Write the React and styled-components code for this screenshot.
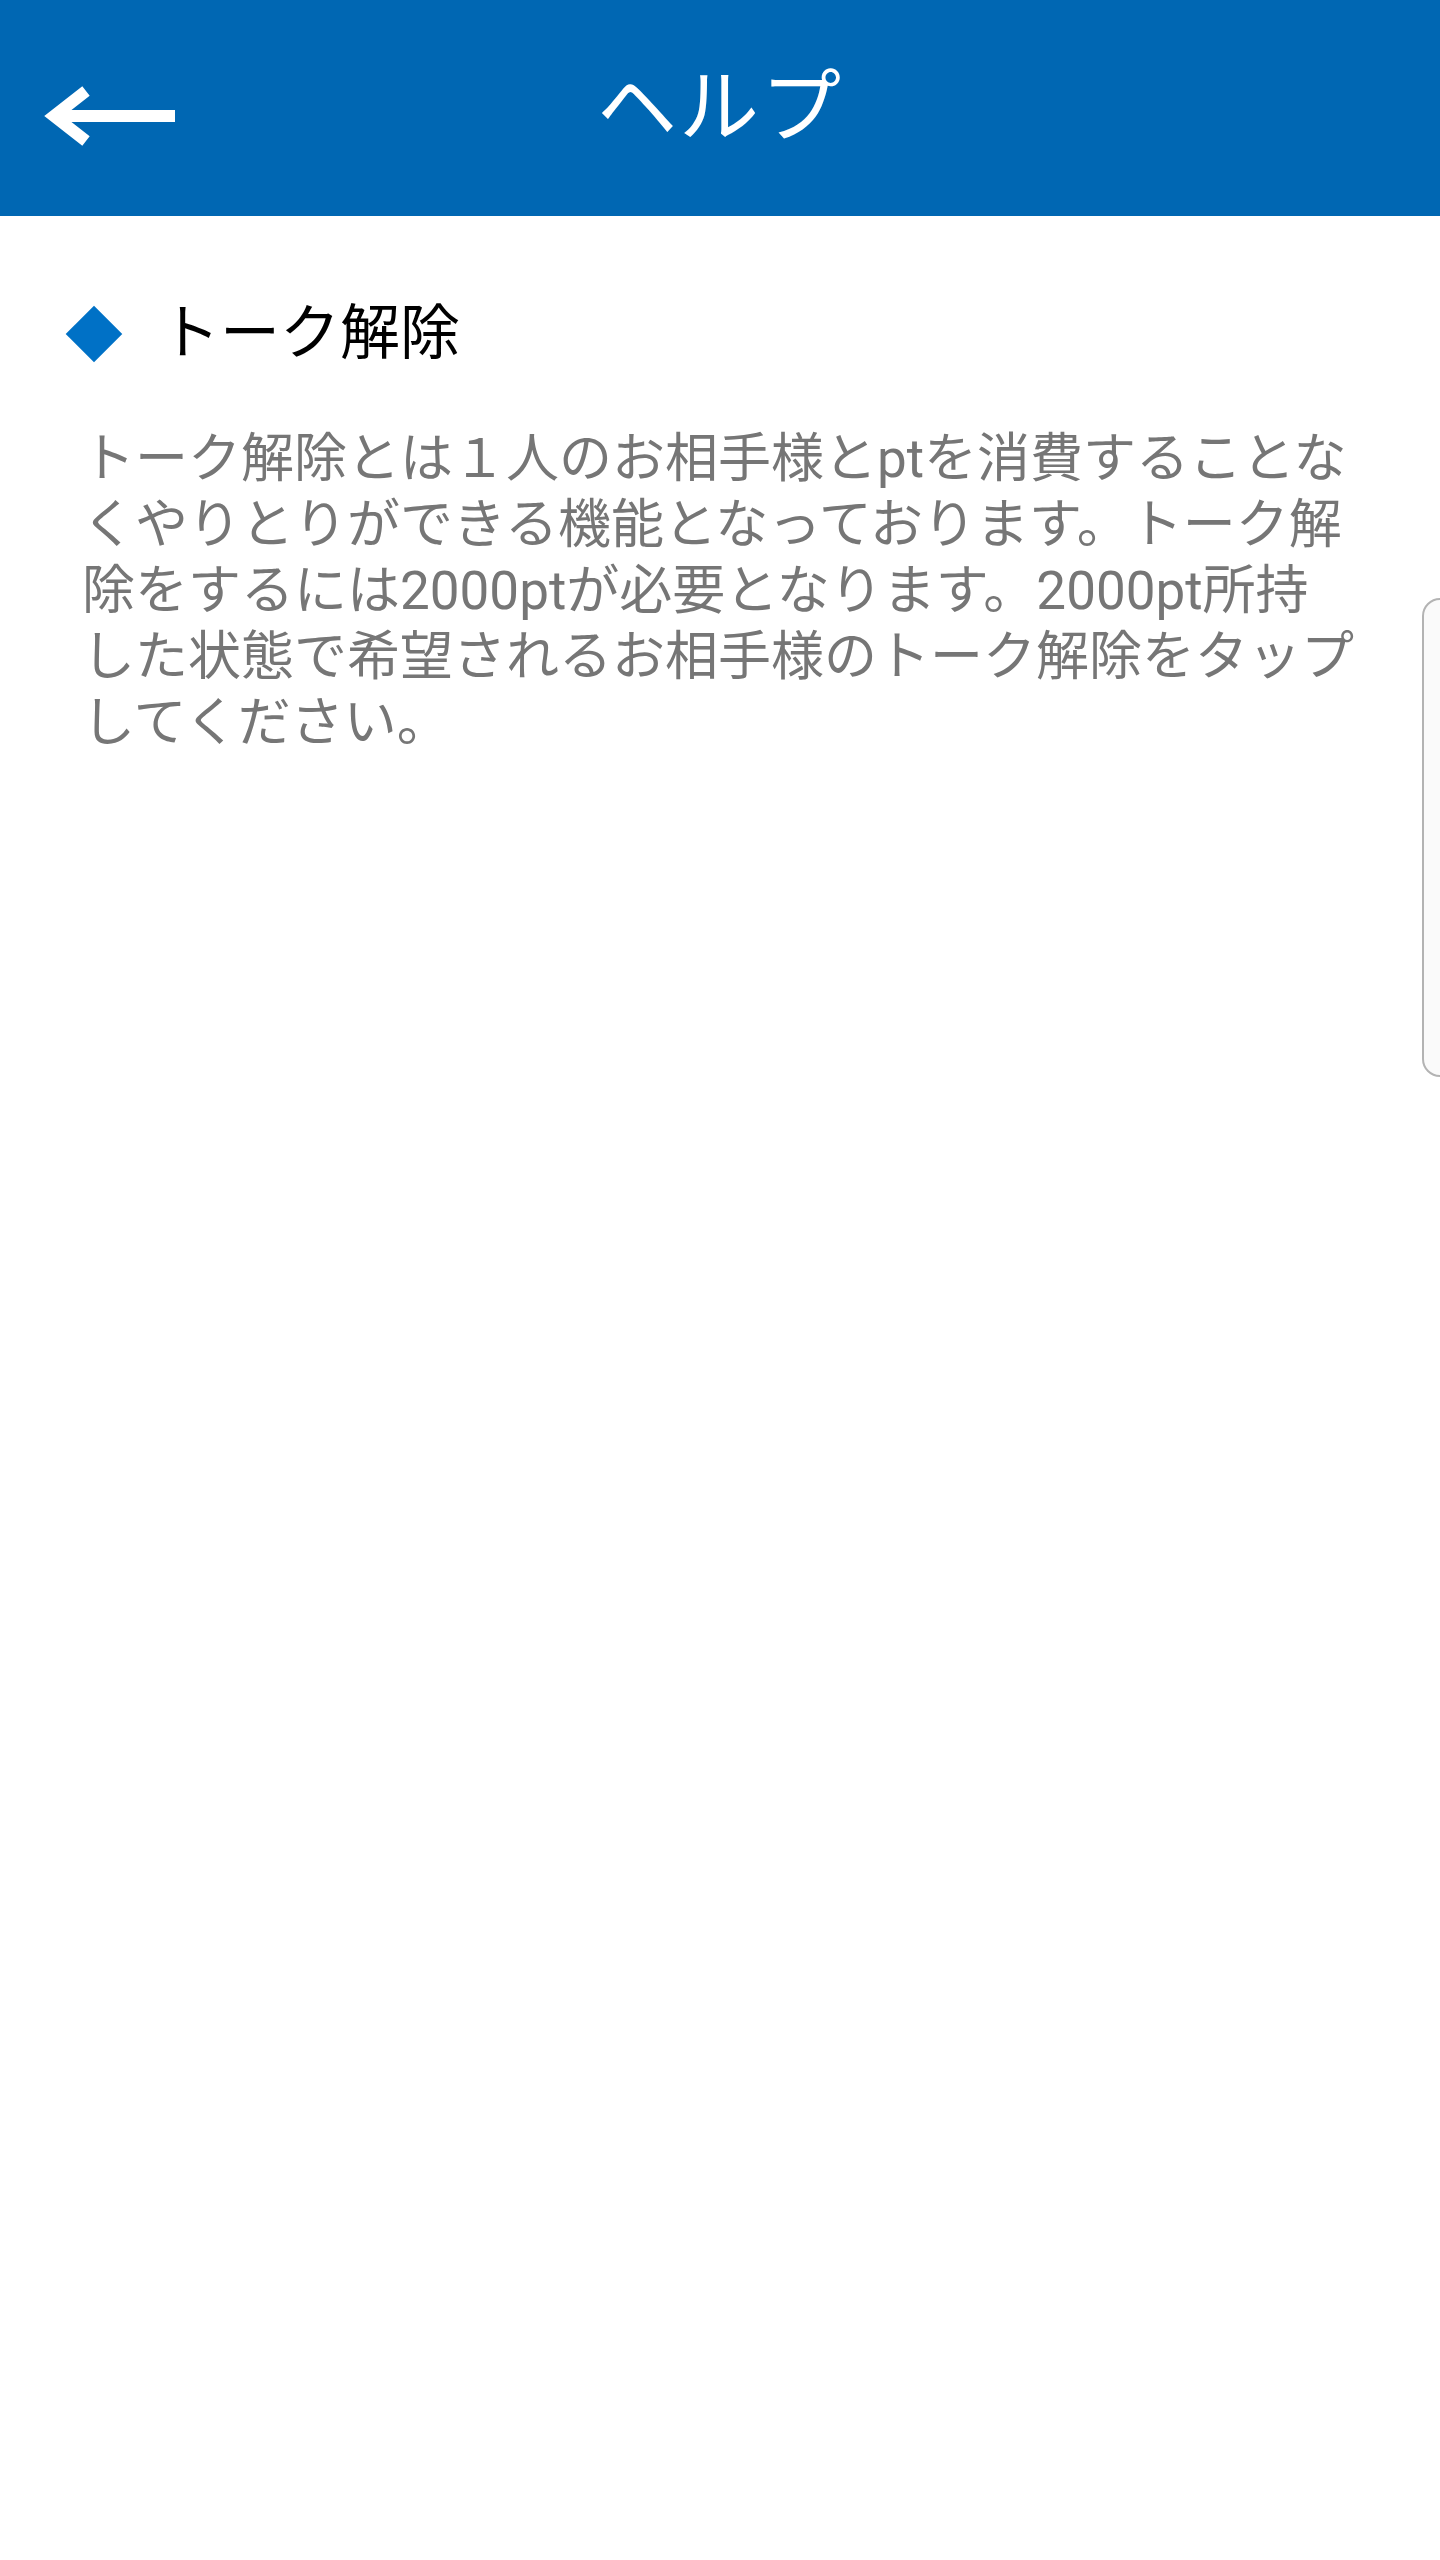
import styled, { createGlobalStyle } from "styled-components";

const GlobalStyle = createGlobalStyle`
  html, body {
    margin: 0;
    padding: 0;
    background: #ffffff;
  }
  body {
    font-family: Roboto, "Noto Sans CJK JP", sans-serif;
  }
`;

const Page = styled.div`
  position: relative;
  width: 1440px;
  min-height: 2560px;
  background: #ffffff;
  overflow: hidden;
`;

const Header = styled.header`
  height: 216px;
  background: #0067b3;
  display: grid;
  grid-template-columns: 1fr auto 1fr;
  align-items: center;
`;

const BackButton = styled.button`
  justify-self: start;
  display: flex;
  align-items: center;
  padding: 0 0 0 44px;
  margin-top: 16px;
  border: 0;
  background: transparent;
  cursor: pointer;
`;

const Title = styled.h1`
  margin: 0;
  color: #ffffff;
  font-size: 80px;
  font-weight: 400;
  line-height: 1;
  letter-spacing: 2px;
`;

const Content = styled.main`
  padding: 82px 0 0;
`;

const SectionTitle = styled.h2`
  display: flex;
  align-items: center;
  gap: 38px;
  margin: 0;
  padding-left: 65px;
  color: #000000;
  font-size: 60px;
  font-weight: 400;
  line-height: 72px;
`;

const Diamond = styled.span`
  flex: none;
  display: flex;
  align-items: center;
  justify-content: center;
  width: 57px;
  height: 57px;

  &::before {
    content: "";
    width: 40px;
    height: 40px;
    background: #0071c6;
    transform: rotate(45deg);
  }
`;

const Body = styled.p`
  margin: 56px 0 0 82px;
  width: 24.12em;
  color: #767676;
  font-size: 53px;
  line-height: 66px;
`;

const EdgeHandle = styled.div`
  position: absolute;
  top: 598px;
  left: 1422px;
  width: 40px;
  height: 479px;
  box-sizing: border-box;
  border: 2px solid #b3b3b3;
  border-radius: 18px;
  background: #fafafa;
`;

const BackArrow = () => (
  <svg width="140" height="64" viewBox="0 0 140 64" aria-hidden="true">
    <g
      fill="none"
      stroke="#ffffff"
      strokeWidth="12"
      strokeLinecap="butt"
      strokeLinejoin="miter"
    >
      <line x1="131" y1="32" x2="12" y2="32" />
      <polyline points="42,7 10,32 42,57" />
    </g>
  </svg>
);

const App = () => {
  return (
    <Page>
      <GlobalStyle />
      <Header>
        <BackButton aria-label="戻る">
          <BackArrow />
        </BackButton>
        <Title>ヘルプ</Title>
        <div />
      </Header>
      <Content>
        <SectionTitle>
          <Diamond />
          トーク解除
        </SectionTitle>
        <Body>
          トーク解除とは１人のお相手様とptを消費することなくやりとりができる機能となっております。トーク解除をするには2000ptが必要となります。2000pt所持した状態で希望されるお相手様のトーク解除をタップしてください。
        </Body>
      </Content>
      <EdgeHandle />
    </Page>
  );
};

export default App;
